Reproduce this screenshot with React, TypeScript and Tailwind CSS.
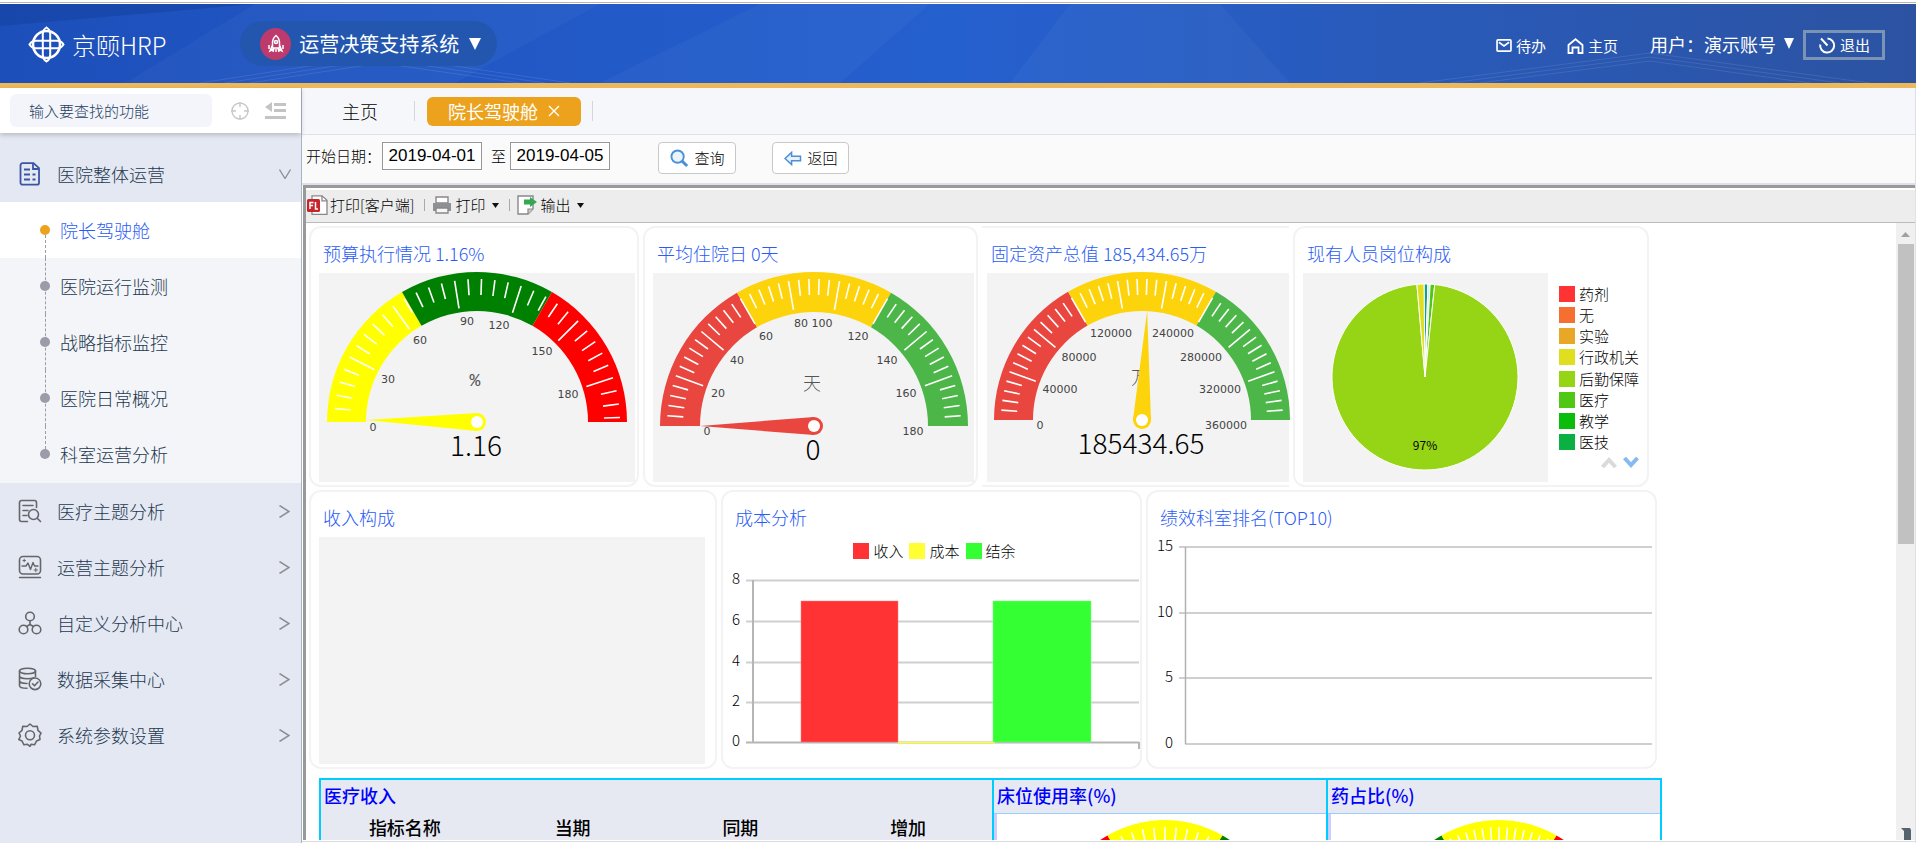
import type { ReactNode } from "react";
import clsx from "clsx";

type Label = [string, number, number];
type Band = { from: number; to: number; color: string };

const subMenus = ["院长驾驶舱", "医院运行监测", "战略指标监控", "医院日常概况", "科室运营分析"];

const iconProps = {
  width: 24,
  height: 24,
  viewBox: "0 0 24 24",
  fill: "none",
  stroke: "#66666a",
  strokeWidth: 1.6,
  strokeLinecap: "round" as const,
  strokeLinejoin: "round" as const,
};

const menus: { title: string; icon: ReactNode }[] = [
  {
    title: "医疗主题分析",
    icon: (
      <svg {...iconProps}>
        <path d="M9.5 22.5H3.5a2 2 0 0 1-2-2v-17a2 2 0 0 1 2-2h13a2 2 0 0 1 2 2v5" />
        <path d="M5 6.5h10M5 11.500h5M5 16.500h4M19.500 19.500l3 3" />
        <circle cx="15.500" cy="15.500" r="5" />
      </svg>
    ),
  },
  {
    title: "运营主题分析",
    icon: (
      <svg {...iconProps}>
        <rect x="1.500" y="1.500" width="21" height="17.500" rx="3.500" />
        <path d="M4 11h4l2-3 2.500 6.500L15 7.500l1.500 3.500H20M1.500 22.500h21" strokeWidth="1.400" />
        <path d="M5 5.500h2.500M6.200 4.200v2.600M16 15h3.500M17.800 13.200v3.600" strokeWidth="1" />
      </svg>
    ),
  },
  {
    title: "自定义分析中心",
    icon: (
      <svg {...iconProps}>
        <circle cx="12" cy="5.500" r="4.300" />
        <circle cx="5.500" cy="18.500" r="4.300" />
        <circle cx="18.500" cy="18.500" r="4.300" />
        <path d="M12 9.800v3.700M12 13.500l-3.500 2M12 13.500l3.500 2" />
      </svg>
    ),
  },
  {
    title: "数据采集中心",
    icon: (
      <svg {...iconProps}>
        <ellipse cx="9.500" cy="4" rx="8" ry="2.800" />
        <path d="M1.500 4v14.500c0 1.500 3 2.800 7.500 2.800M17.500 4v5.500M1.500 9c0 1.500 3.500 2.800 8 2.800 2.500 0 5-.4 6.500-1M1.500 13.800c0 1.500 3.300 2.700 7.500 2.700" />
        <circle cx="17" cy="16.800" r="5.800" />
        <path d="M14.500 16.800l2 2 3.500-3.800" />
      </svg>
    ),
  },
  {
    title: "系统参数设置",
    icon: (
      <svg {...iconProps}>
        <path d="M12 1l3 2.500 4.200-.3.800 4.200 3 2.700-1.500 2.900.5 3.500-3.500 1.500-2 3.800-3.500-.5L12 23.300l-2.500-2-3.500.5-2-3.800L.8 16.500 2.500 13 1 10l3-2.600.8-4.200 4.200.3z" />
        <circle cx="12" cy="12.300" r="4.500" />
      </svg>
    ),
  },
];

const postLegend = [
  { name: "药剂", color: "bg-[#ff3333]" },
  { name: "无", color: "bg-[#f57030]" },
  { name: "实验", color: "bg-[#e9a727]" },
  { name: "行政机关", color: "bg-[#dfdf20]" },
  { name: "后勤保障", color: "bg-[#96d516]" },
  { name: "医疗", color: "bg-[#4fc714]" },
  { name: "教学", color: "bg-[#0bbd0b]" },
  { name: "医技", color: "bg-[#0bb042]" },
];

const costLegend = [
  { name: "收入", color: "bg-[#ff3333]" },
  { name: "成本", color: "bg-[#ffff33]" },
  { name: "结余", color: "bg-[#33ff33]" },
];

const traffic = (a: string, b: string, c: string): Band[] => [
  { from: 0, to: 60, color: a },
  { from: 60, to: 120, color: b },
  { from: 120, to: 180, color: c },
];

// angle runs clockwise from the left end of the dial
const polar = (cx: number, cy: number, r: number, deg: number) => {
  const a = (deg * Math.PI) / 180;
  return [cx - r * Math.cos(a), cy - r * Math.sin(a)];
};

function Dial({
  cx,
  cy,
  outer,
  inner,
  bands,
  step,
  major = 5,
}: {
  cx: number;
  cy: number;
  outer: number;
  inner: number;
  bands: Band[];
  step: number;
  major?: number;
}) {
  const ticks: number[] = [];
  for (let i = 1; i * step < 179.5; i++) ticks.push(i);
  return (
    <g>
      {bands.map((b) => {
        const p = [
          polar(cx, cy, outer, b.from),
          polar(cx, cy, outer, b.to),
          polar(cx, cy, inner, b.to),
          polar(cx, cy, inner, b.from),
        ];
        return (
          <path
            key={b.from}
            fill={b.color}
            d={`M${p[0]}A${outer} ${outer} 0 0 1 ${p[1]}L${p[2]}A${inner} ${inner} 0 0 0 ${p[3]}Z`}
          />
        );
      })}
      {ticks.map((i) => {
        const a = polar(cx, cy, outer - 7, i * step);
        const b = polar(cx, cy, i % major === 0 ? inner + 4 : outer - 23, i * step);
        return <line key={i} x1={a[0]} y1={a[1]} x2={b[0]} y2={b[1]} stroke="#fff" strokeWidth="1.6" />;
      })}
    </g>
  );
}

function Gauge({
  cx,
  cy,
  outer,
  inner,
  bands,
  step,
  needle,
  needleColor,
  labels,
  unit,
  value,
}: {
  cx: number;
  cy: number;
  outer: number;
  inner: number;
  bands: Band[];
  step: number;
  needle: number;
  needleColor: string;
  labels: Label[];
  unit: string;
  value: string;
}) {
  const tip = polar(cx, cy, inner, needle);
  const l = polar(cx, cy, 9, needle - 90);
  const r = polar(cx, cy, 9, needle + 90);
  return (
    <svg className="block h-[209px] w-full overflow-visible" fontFamily="'DejaVu Sans', sans-serif">
      <Dial cx={cx} cy={cy} outer={outer} inner={inner} bands={bands} step={step} />
      {labels.map(([text, x, y]) => (
        <text key={text} x={x} y={y + 4} fontSize="11" fill="#444" textAnchor="middle">
          {text}
        </text>
      ))}
      <text
        x={cx - 2}
        y={cy - 36}
        fontSize="18"
        fill="#555"
        textAnchor="middle"
        fontFamily="'Liberation Mono', 'Noto Sans CJK SC', monospace"
        fontWeight="300"
      >
        {unit}
      </text>
      <path d={`M${tip}L${l}L${r}Z`} fill={needleColor} />
      <circle cx={cx} cy={cy} r="9" fill={needleColor} />
      <circle cx={cx} cy={cy} r="6" fill="#fff" />
      <text x={cx - 1} y={cy + 34} fontSize="28" fill="#000" textAnchor="middle" fontFamily="'Noto Sans CJK SC', sans-serif" fontWeight="300">
        {value}
      </text>
    </svg>
  );
}

function StaffPie() {
  const cx = 122;
  const cy = 104;
  const slices = [
    { from: -0.6, to: 1.8, color: "#0ba38a" },
    { from: 1.8, to: 3.2, color: "#cdeee6" },
    { from: 3.2, to: 6, color: "#4fc714" },
    { from: 6, to: 355, color: "#96d516" },
    { from: 355, to: 359.4, color: "#dfdf20" },
  ];
  return (
    <svg className="block h-[209px] w-full">
      {slices.map((s) => {
        const a = polar(cx, cy, 93, s.from + 90);
        const b = polar(cx, cy, 93, s.to + 90);
        return (
          <path
            key={s.from}
            d={`M${cx} ${cy}L${a}A93 93 0 ${s.to - s.from > 180 ? 1 : 0} 1 ${b}Z`}
            fill={s.color}
            stroke="#fff"
            strokeWidth="1"
          />
        );
      })}
      <text x={cx} y={cy + 73} fontSize="12" textAnchor="middle" fontFamily="'Noto Sans CJK SC', sans-serif">
        97%
      </text>
    </svg>
  );
}

function CostChart() {
  const rows: [string, number][] = [["8", 13], ["6", 54], ["4", 95], ["2", 135], ["0", 175]];
  return (
    <svg className="block h-[190px] w-full overflow-visible" fontFamily="'Noto Sans CJK SC', sans-serif" fontSize="15" fontWeight="300">
      {rows.map(([text, y]) => (
        <g key={text}>
          <text x="17" y={y + 4} textAnchor="end" fill="#000">
            {text}
          </text>
          <line x1="23" x2="416" y1={y + 0.5} y2={y + 0.5} stroke={text === "0" ? "#b5b5b5" : "#cfcfcf"} strokeWidth="2" />
        </g>
      ))}
      <path d="M30 13v163M416 175v7" stroke="#b5b5b5" strokeWidth="2" />
      <rect x="78" y="34" width="97" height="141" fill="#ff3333" stroke="#ff8080" strokeWidth=".5" />
      <path d="M175 175.500h97" stroke="#ffff33" strokeWidth="1.500" />
      <rect x="270" y="34" width="98" height="141" fill="#33ff33" stroke="#80ff80" strokeWidth=".5" />
    </svg>
  );
}

function RankChart() {
  const rows: [string, number][] = [["15", 10], ["10", 76], ["5", 141], ["0", 207]];
  return (
    <svg className="block h-[220px] w-full overflow-visible" fontFamily="'Noto Sans CJK SC', sans-serif" fontSize="15" fontWeight="300">
      {rows.map(([text, y]) => (
        <g key={text}>
          <text x="25" y={y + 4} textAnchor="end" fill="#000">
            {text}
          </text>
          <line x1={text === "0" ? 37 : 31} x2="504" y1={y} y2={y} stroke="#cfcfcf" strokeWidth="2" />
        </g>
      ))}
      <path d="M37.500 10v197" stroke="#b0b0b0" strokeWidth="1.500" />
    </svg>
  );
}

function Card({ title, open, children }: { title: string; open?: boolean; children: ReactNode }) {
  return (
    <section className={clsx("min-w-0 border-[#f3f3f3]", open ? "border-y-2" : "rounded-xl border-2")}>
      <h2
        className={clsx(
          "flex h-[45px] items-center pt-[5px] text-lg leading-6 font-light whitespace-nowrap text-[#2a5cf5]",
          open ? "pl-[9px]" : "pl-3"
        )}
      >
        {title}
      </h2>
      {children}
    </section>
  );
}

function Legend({ items, className }: { items: { name: string; color: string }[]; className: string }) {
  return (
    <ul className={className}>
      {items.map((item) => (
        <li key={item.name} className="flex items-center gap-1 text-[15px] leading-5 font-light whitespace-nowrap text-black">
          <span className={clsx("size-4 shrink-0", item.color)} />
          {item.name}
        </li>
      ))}
    </ul>
  );
}

function TopBar() {
  return (
    <header className="relative flex h-[84px] shrink-0 items-center border-b-5 border-[#ecb95a] bg-linear-to-r from-[#1d4fba] via-[#2560cf] to-[#2c53a2] pr-[31px] pl-7 text-white">
      <svg className="absolute inset-0 size-full" preserveAspectRatio="none" viewBox="0 0 1916 79">
        <path d="M0 0h255L0 22z" fill="#123c95" opacity=".4" />
        <path d="M255 0l-130 79h330L600 0z" fill="#fff" opacity=".03" />
        <path d="M600 79L760 0h170l-90 79zM1010 79l60-79h150l70 79z" fill="#fff" opacity=".03" />
        <path
          d="M200 79l180-28 190 28M225 79l155-24 165 24M250 79l130-20 140 20M1420 79l230-30 220 30M1450 79l200-26 190 26M1480 79l170-22 160 22"
          fill="none"
          stroke="#fff"
          opacity=".1"
        />
      </svg>
      <div className="relative flex items-center gap-[7px] pt-0.5">
        <svg width="37" height="37" viewBox="0 0 37 37" fill="none" stroke="#fff">
          <circle cx="18.500" cy="18.500" r="13.500" strokeWidth="2.600" />
          <path d="M14.800 32V8c0-3 1.200-5 3.700-6.500C21 3 22.200 5 22.200 8v24" strokeWidth="2" />
          <path d="M14.800 29c0 3 1.200 5 3.700 6.500 2.500-1.500 3.700-3.500 3.700-6.500" strokeWidth="2" />
          <path d="M8 14.800C5 14.800 3 16 1.500 18.500 3 21 5 22.200 8 22.200h21c3 0 5-1.200 6.500-3.700-1.500-2.500-3.500-3.700-6.500-3.700z" strokeWidth="2" />
        </svg>
        <span className="text-2xl leading-8 font-light">京颐HRP</span>
      </div>
      <button className="relative ml-[74px] flex h-[45px] items-center gap-2 rounded-full bg-[#2356ae] pr-4 pl-5">
        <span className="flex h-8 w-[31px] items-center justify-center rounded-[50%] bg-[#bd3a6c]">
          <svg width="16" height="20" viewBox="0 0 16 20" fill="none" stroke="#fff" strokeWidth="1.500">
            <path d="M8 1.500c-3 2.500-3.500 5-3.500 7.500v5h7V9c0-2.500-.5-5-3.500-7.500zM4.500 11L2 17l3-1.500M11.500 11l2.500 6-3-1.500M6 14l-1 4M10 14l1 4M8 15v3M1 11v4M15 11v4" />
            <circle cx="8" cy="8" r="1.500" />
          </svg>
        </span>
        <span className="text-xl leading-6">运营决策支持系统</span>
        <svg width="12" height="12" viewBox="0 0 12 12" fill="#fff" className="ml-0.5">
          <path d="M0 0h12L6 12z" />
        </svg>
      </button>
      <nav className="relative ml-auto flex items-center text-[15px] leading-5">
        <a href="#todo" className="flex items-center gap-1 pt-1">
          <svg width="16" height="13" viewBox="0 0 17 14" fill="none" stroke="#fff" strokeWidth="1.800">
            <rect x="1" y="1" width="15" height="12" rx="1" />
            <path d="M3 3.500l5.500 4 5.500-4" />
          </svg>
          待办
        </a>
        <a href="#home" className="ml-[21px] flex items-center gap-1 pt-1">
          <svg width="17" height="16" viewBox="0 0 17 16" fill="none" stroke="#fff" strokeWidth="1.800">
            <path d="M1.500 15V7L8.500 1.200 15.500 7v8h-4V9.500h-6V15z" />
          </svg>
          主页
        </a>
        <button className="ml-8 flex items-center text-lg leading-6">
          用户：演示账号
          <svg width="10" height="11" viewBox="0 0 10 11" fill="#fff" className="ml-2">
            <path d="M0 0h10L5 11z" />
          </svg>
        </button>
        <button className="mt-[3px] ml-[9px] flex h-[30px] w-[82px] items-center justify-center gap-1 border-3 border-[#7b93b5]">
          <svg width="18" height="17" viewBox="0 0 18 17" fill="none" stroke="#fff" strokeWidth="2">
            <path d="M9.500 1.500a7 7 0 1 1-7.300 6M3 1.500l6.500 7" />
          </svg>
          退出
        </button>
      </nav>
    </header>
  );
}

function Sidebar() {
  return (
    <aside className="flex w-[302px] shrink-0 flex-col border-r border-[#a9b3c6] bg-[#e4e8f2] text-lg font-light text-[#1f3850]">
      <div className="z-10 flex h-[45px] items-center bg-white pl-[10px] shadow-[0_2px_5px_rgba(0,0,0,0.2)]">
        <input
          aria-label="查找功能"
          placeholder="输入要查找的功能"
          className="h-[33px] w-[202px] rounded-md bg-[#f3f5fa] px-[19px] text-[15px] font-light outline-none placeholder:text-[#1f3f63]"
        />
        <button aria-label="定位" className="ml-[19px]">
          <svg width="18" height="18" viewBox="0 0 18 18" fill="none" stroke="#c9c9cb" strokeWidth="1.500">
            <circle cx="9" cy="9" r="8" />
            <path d="M9 0v5M9 13v5M0 9h5M13 9h5" />
          </svg>
        </button>
        <button aria-label="收起" className="ml-4">
          <svg width="21" height="18" viewBox="0 0 21 18" fill="#c4c4c6">
            <path d="M7 0v10L0 5zM9 1h12v3H9zM9 7h12v3H9zM0 14h21v3H0z" />
          </svg>
        </button>
      </div>
      <button className="mt-[13px] flex h-14 items-center pr-[10px] pl-[19px]">
        <svg width="22" height="24" viewBox="0 0 22 24" fill="none" stroke="#3a55a4" strokeWidth="1.800">
          <path d="M3.500 1.200h11l5.500 5v14.500a2 2 0 0 1-2 2H3.500a2 2 0 0 1-2-2V3.200a2 2 0 0 1 2-2z" />
          <path d="M14 1.500V7h5.500M5 7.500h6M5 12.500h6M5 17.500h6M13.500 12.500h3M13.500 17.500h3" />
        </svg>
        <span className="ml-4 leading-6">医院整体运营</span>
        <svg width="12" height="10" viewBox="0 0 12 10" fill="none" stroke="#8c8e92" strokeWidth="1.300" className="ml-auto">
          <path d="M.5.500L6 9.500 11.500.500" />
        </svg>
      </button>
      <ul className="bg-[#f3f5f9] pb-px">
        {subMenus.map((name, i) => (
          <li key={name} className={clsx("relative h-14", i === 0 && "bg-white")}>
            <span
              className={clsx(
                "absolute left-[45px] border-l border-dashed border-[#9c9ba8]",
                i === 0 ? "top-1/2 bottom-0" : i === subMenus.length - 1 ? "top-0 bottom-1/2" : "inset-y-0"
              )}
            />
            <a href="#menu" className={clsx("relative flex h-full items-center pl-10 leading-6", i === 0 && "text-[#2a5cf5]")}>
              <span className={clsx("mr-[10px] size-[10px] rounded-full", i === 0 ? "bg-[#eca21d]" : "bg-[#9c9ba8]")} />
              {name}
            </a>
          </li>
        ))}
      </ul>
      {menus.map((m) => (
        <button key={m.title} className="flex h-14 shrink-0 items-center pr-[11px] pl-[18px]">
          {m.icon}
          <span className="ml-[15px] leading-6">{m.title}</span>
          <svg width="11" height="13" viewBox="0 0 11 13" fill="none" stroke="#8c8e92" strokeWidth="1.500" className="ml-auto">
            <path d="M.5.500l9.500 6-9.500 6" />
          </svg>
        </button>
      ))}
    </aside>
  );
}

function Tabs() {
  return (
    <div className="flex h-[47px] shrink-0 items-center border-b border-[#dfe0e8] bg-[#f6f7fb] pl-10 text-lg leading-6 text-[#333]">
      <a href="#home" className="font-light text-black">
        主页
      </a>
      <span className="ml-9 h-5 w-px bg-[#d4d6da]" />
      <div className="ml-3 flex h-[29px] w-[154px] items-center justify-center gap-[10px] rounded-md bg-[#eca21d] text-white">
        院长驾驶舱
        <button aria-label="关闭">
          <svg width="12" height="12" viewBox="0 0 12 12" stroke="#fff" strokeWidth="1.400">
            <path d="M1 1l10 10M11 1L1 11" />
          </svg>
        </button>
      </div>
      <span className="ml-[11px] h-5 w-px bg-[#d4d6da]" />
    </div>
  );
}

function Filters() {
  const field = "mb-1 h-7 w-[100px] border border-[#999] bg-white text-center font-['Liberation_Sans',sans-serif] text-[17px] font-normal";
  return (
    <form className="flex h-[48px] shrink-0 items-center bg-[#fafafa] pb-0.5 pl-1 text-[15px] leading-5 font-light text-black">
      <label htmlFor="start" className="w-[76px] pb-1">
        开始日期：
      </label>
      <input id="start" defaultValue="2019-04-01" className={field} />
      <label htmlFor="end" className="mx-1 pb-1 pl-[5px]">
        至
      </label>
      <input id="end" defaultValue="2019-04-05" className={field} />
      <button type="button" className="ml-12 flex h-8 w-[78px] items-center justify-center gap-1.5 rounded border border-[#c9c9c9] bg-white">
        <svg width="19" height="19" viewBox="0 0 20 20" fill="none" stroke="#4c8fd6" strokeWidth="2">
          <circle cx="8" cy="8" r="6.500" fill="#eaf4fd" />
          <path d="M12.500 12.500l5.500 5.500" strokeWidth="3" />
        </svg>
        查询
      </button>
      <button type="button" className="ml-9 flex h-8 w-[77px] items-center justify-center gap-1.5 rounded border border-[#c9c9c9] bg-white">
        <svg width="18" height="15" viewBox="0 0 19 16" fill="#e8f2fc" stroke="#4c8fd6" strokeWidth="1.600">
          <path d="M1 8l7-6.500V5.500h9.500v5H8v4z" />
        </svg>
        返回
      </button>
    </form>
  );
}

function Caret() {
  return (
    <svg width="7" height="5" viewBox="0 0 7 5" fill="#111" className="ml-1">
      <path d="M0 0h7L3.500 5z" />
    </svg>
  );
}

function Toolbar() {
  return (
    <div className="flex h-[35px] shrink-0 items-center border-t-2 border-b border-t-white border-b-[#bbb] bg-[#ededed] pb-0.5 pl-px text-[15px] leading-5 font-light text-black">
      <button className="flex items-center gap-0.5">
        <svg width="21" height="20" viewBox="0 0 21 20">
          <path d="M5 .8h10l5 4.500v14H5z" fill="#fff" stroke="#888" strokeWidth="1.300" />
          <path d="M15 .8v5h5" fill="none" stroke="#888" strokeWidth="1.300" />
          <rect y="4" width="13" height="13" rx="1.500" fill="#c8242b" />
          <path d="M3 14V7.500h3.500M3 10.500h3M8.500 7v7h2.500" fill="none" stroke="#fff" strokeWidth="1.500" />
        </svg>
        打印[客户端]
      </button>
      <span className="mr-[7px] ml-[10px] h-3 w-px bg-[#aaa]" />
      <button className="flex items-center gap-[3px]">
        <svg width="20" height="18" viewBox="0 0 20 18">
          <path d="M4 1h12v6H4z" fill="#fff" stroke="#888" strokeWidth="1.400" />
          <path d="M1 7h18v8H1z" fill="#8e9095" />
          <path d="M4 12h12v5H4z" fill="#f5f5f5" stroke="#888" strokeWidth="1.400" />
        </svg>
        打印
        <Caret />
      </button>
      <span className="mr-[7px] ml-[10px] h-3 w-px bg-[#aaa]" />
      <button className="flex items-center gap-[3px]">
        <svg width="20" height="20" viewBox="0 0 20 20">
          <path d="M1 1h15v13l-5 5H1z" fill="#fff" stroke="#888" strokeWidth="1.400" />
          <path d="M11 19v-5h5" fill="#ccc" stroke="#888" strokeWidth="1.200" />
          <path d="M7 4.500h6V2l7 5-7 5V9.500H7z" fill="#35a853" />
        </svg>
        输出
        <Caret />
      </button>
    </div>
  );
}

function MiniDial({ title, bands, step }: { title: string; bands: Band[]; step: number }) {
  return (
    <section className="min-w-0 border-t-2 border-l-2 border-[#00ccff] last:border-r-2">
      <h3 className="h-[34px] border-b border-[#99ccff] bg-[#e6e9f2] pl-[3px] text-lg leading-[30px] font-medium text-[#0000ff]">{title}</h3>
      <svg className="block h-[130px] w-full border-l-3 border-[#ccccff]">
        <Dial cx={168} cy={121} outer={115} inner={82} bands={bands} step={step} />
      </svg>
    </section>
  );
}

function Report() {
  return (
    <div className="min-w-0 flex-1 overflow-hidden pt-[3px] pl-[3px]">
      <div className="grid h-[261px] max-w-[1340px] grid-cols-[330fr_335fr_307fr_356fr] gap-1">
        <Card title="预算执行情况 1.16%">
          <div className="mr-0.5 ml-2 bg-[#f3f3f3]">
            <Gauge
              cx={158}
              cy={149}
              outer={150}
              inner={111}
              bands={traffic("#ffff00", "#008000", "#ff0000")}
              step={5.4}
              needle={1}
              needleColor="#ffff00"
              labels={[["0", 54, 154], ["30", 69, 106], ["60", 101, 67], ["90", 148, 48], ["120", 180, 52], ["150", 223, 78], ["180", 249, 121]]}
              unit="%"
              value="1.16"
            />
          </div>
        </Card>
        <Card title="平均住院日 0天">
          <div className="mr-0.5 ml-2 bg-[#f3f3f3]">
            <Gauge
              cx={161}
              cy={153}
              outer={154}
              inner={114}
              bands={traffic("#e8463f", "#fdd30b", "#4cb648")}
              step={4}
              needle={0}
              needleColor="#e8463f"
              labels={[
                ["0", 54, 158], ["20", 65, 120], ["40", 84, 87], ["60", 113, 63], ["80", 148, 50],
                ["100", 169, 50], ["120", 205, 63], ["140", 234, 87], ["160", 253, 120], ["180", 260, 158],
              ]}
              unit="天"
              value="0"
            />
          </div>
        </Card>
        <Card title="固定资产总值 185,434.65万" open>
          <div className="ml-[5px] bg-[#f3f3f3]">
            <Gauge
              cx={155}
              cy={147}
              outer={148}
              inner={109}
              bands={traffic("#e8463f", "#fdd30b", "#4cb648")}
              step={4}
              needle={92.7}
              needleColor="#fdd30b"
              labels={[
                ["0", 53, 152], ["40000", 73, 116], ["80000", 92, 84], ["120000", 124, 60],
                ["240000", 186, 60], ["280000", 214, 84], ["320000", 233, 116], ["360000", 239, 152],
              ]}
              unit="万"
              value="185434.65"
            />
          </div>
        </Card>
        <Card title="现有人员岗位构成">
          <div className="flex">
            <div className="ml-2 w-[245px] shrink-0 bg-[#f3f3f3]">
              <StaffPie />
            </div>
            <div className="ml-[11px] flex flex-col pt-[10px]">
              <Legend items={postLegend} className="grid h-[170px] grid-rows-8" />
              <div className="flex justify-end gap-1.5 pt-1">
                <button aria-label="上一页">
                  <svg width="16" height="11" viewBox="0 0 16 11" fill="none" stroke="#dadada" strokeWidth="4">
                    <path d="M1.500 10L8 3l6.500 7" />
                  </svg>
                </button>
                <button aria-label="下一页">
                  <svg width="16" height="11" viewBox="0 0 16 11" fill="none" stroke="#87baf0" strokeWidth="4">
                    <path d="M1.500 1L8 8l6.500-7" />
                  </svg>
                </button>
              </div>
            </div>
          </div>
        </Card>
      </div>

      <div className="mt-[3px] grid h-[279px] max-w-[1348px] grid-cols-[408fr_421fr_511fr] gap-1">
        <Card title="收入构成">
          <div className="mr-[10px] ml-2 h-[227px] bg-[#f3f3f3]" />
        </Card>
        <Card title="成本分析">
          <Legend items={costLegend} className="flex h-[30px] items-center justify-center gap-1.5 pb-0.5 pl-1.5" />
          <CostChart />
        </Card>
        <Card title="绩效科室排名(TOP10)">
          <RankChart />
        </Card>
      </div>

      <div className="mt-[9px] ml-[10px] grid max-w-[1343px] grid-cols-[673fr_334fr_336fr]">
        <section className="min-w-0 border-t-2 border-l-2 border-[#00ccff] bg-[#e6e9f2]">
          <h3 className="h-[33px] pl-[3px] text-lg leading-[30px] font-medium text-[#0000ff]">医疗收入</h3>
          <table className="w-full table-fixed text-lg leading-7 text-black">
            <thead>
              <tr>
                <th className="font-medium">指标名称</th>
                <th className="font-medium">当期</th>
                <th className="font-medium">同期</th>
                <th className="font-medium">增加</th>
              </tr>
            </thead>
          </table>
        </section>
        <MiniDial title="床位使用率(%)" bands={traffic("#ff0000", "#ffff00", "#008000")} step={6} />
        <MiniDial title="药占比(%)" bands={traffic("#008000", "#ffff00", "#ff0000")} step={4.5} />
      </div>
    </div>
  );
}

export default function App() {
  return (
    <div className="flex h-screen flex-col overflow-hidden bg-white font-['Noto_Sans_CJK_SC',sans-serif]">
      <div className="mt-0.5 mb-px h-px shrink-0 bg-[#b5b5b5]" />
      <TopBar />
      <div className="flex min-h-0 flex-1">
        <Sidebar />
        <main className="flex min-w-0 flex-1 flex-col border-r border-[#dfe0e8] bg-white">
          <Tabs />
          <Filters />
          <div className="h-0.5 shrink-0 bg-[#dfe0e8]" />
          <div className="ml-px flex min-h-0 flex-1 flex-col border-t-3 border-l-3 border-[#999]">
            <Toolbar />
            <div className="flex min-h-0 flex-1">
              <Report />
              <div className="flex w-[19px] shrink-0 flex-col items-center bg-[#f0f0f0]">
                <svg width="9" height="5" viewBox="0 0 9 5" fill="#a0a0a0" className="mt-[9px] mb-[7px] shrink-0">
                  <path d="M4.500 0L9 5H0z" />
                </svg>
                <div className="h-[300px] w-4 shrink-0 bg-[#c1c1c1]" />
                <svg width="10" height="12" viewBox="0 0 10 12" className="mt-auto shrink-0">
                  <path d="M0 0h9l1 2v10H3V3z" fill="#55636d" />
                </svg>
              </div>
            </div>
          </div>
          <div className="mb-px h-0.5 shrink-0 border-b border-[#d8dae0]" />
        </main>
      </div>
    </div>
  );
}
